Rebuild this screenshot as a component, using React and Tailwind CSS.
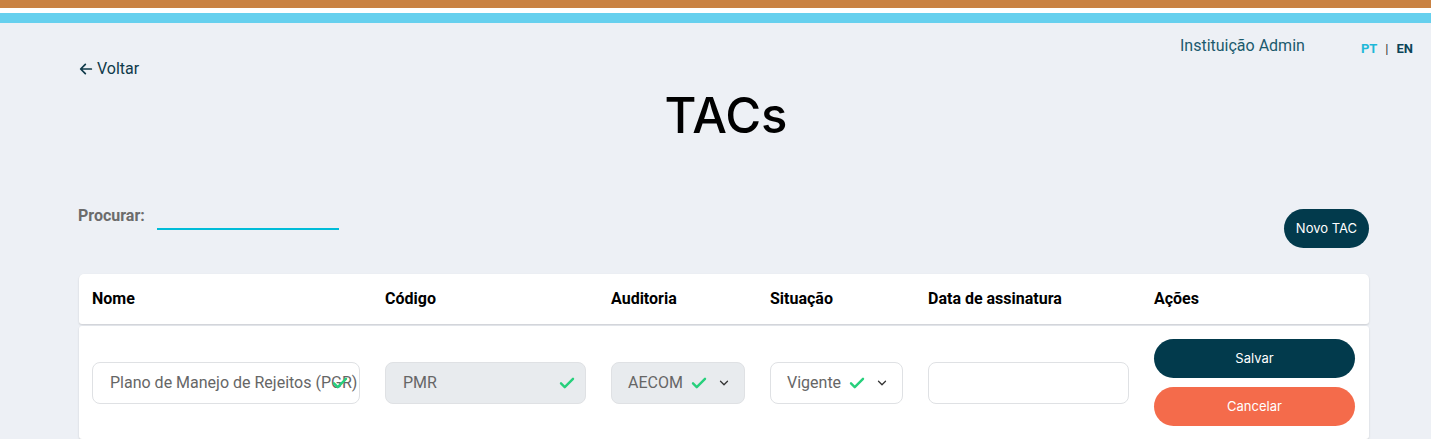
import React, { useState } from "react";

const Check = ({ className = "" }) => (
  <svg viewBox="0 0 24 24" className={className} fill="none" stroke="#27d07c" strokeWidth="3.2" strokeLinecap="round" strokeLinejoin="round">
    <path d="M4 12.5l5 5L20 6.5" />
  </svg>
);

const Chevron = () => (
  <svg viewBox="0 0 24 24" className="w-[14px] h-[14px]" fill="none" stroke="#333" strokeWidth="2.2" strokeLinecap="round" strokeLinejoin="round">
    <path d="M6 9l6 6 6-6" />
  </svg>
);

const TACs = () => {
  const [search, setSearch] = useState("");

  return (
    <div className="min-h-screen bg-[#edf0f5] font-['Roboto',sans-serif]">
      {/* top stripes */}
      <div className="h-[8px] bg-[#c98243]" />
      <div className="h-[5px] bg-white" />
      <div className="h-[10px] bg-[#66d0ee]" />

      <div className="flex justify-end items-center pt-[8px] pr-[18px] h-[37px]">
        <span className="text-[16px] text-[#1b5a6d] mr-[56px]">Instituição Admin</span>
        <div className="flex items-center gap-[8px] text-[13px] font-bold pt-[6px]">
          <span className="text-[#1fb8d8]">PT</span>
          <span className="text-[#333] font-normal">|</span>
          <span className="text-[#0b4458]">EN</span>
        </div>
      </div>

      <div className="ml-[78px] w-[1292px]">
        <button className="flex items-center gap-[3px] text-[16px] text-[#0f3a4a] mt-[-3px]">
          <svg viewBox="0 0 24 24" className="w-[16px] h-[16px]" fill="none" stroke="#0f3a4a" strokeWidth="2.6" strokeLinecap="round" strokeLinejoin="round">
            <path d="M20 12H5M11 5l-7 7 7 7" />
          </svg>
          <span>Voltar</span>
        </button>

        <h1 className="text-center text-[49px] leading-none font-medium text-black font-['Inter',sans-serif] mt-[10px] pl-[4px]">
          TACs
        </h1>

        <div className="flex items-end justify-between mt-[62px]">
          <div className="flex items-center mb-[17px]">
            <label className="text-[16px] font-bold text-[#6b6b6b]">Procurar:</label>
            <input
              value={search}
              onChange={(e) => setSearch(e.target.value)}
              className="ml-[12px] w-[182px] h-[22px] bg-transparent border-b-2 border-[#00bcd8] outline-none mt-[6px]"
            />
          </div>
          <button className="h-[39px] px-[12px] rounded-full bg-[#023a4c] text-white text-[13px] font-['Inter',sans-serif] mr-[1px] mb-[-1px]">
            Novo TAC
          </button>
        </div>

        <div className="mt-[27px] ml-[1px] w-[1290px]">
          <div className="grid grid-cols-[293px_226px_159px_158px_226px_1fr] items-center h-[50px] px-[13px] bg-white rounded-t-[5px] rounded-b-[3px] shadow-[0_1px_2px_rgba(0,0,0,0.15)] text-[16px] font-bold text-black">
            <span>Nome</span>
            <span>Código</span>
            <span>Auditoria</span>
            <span>Situação</span>
            <span>Data de assinatura</span>
            <span>Ações</span>
          </div>

          <div className="grid grid-cols-[293px_226px_159px_158px_226px_1fr] items-center h-[113px] mt-[2px] pl-[13px] pr-[14px] bg-white rounded-[3px] shadow-[0_1px_2px_rgba(0,0,0,0.15)] text-[16px] text-[#666]">
            <div className="w-[268px] h-[42px] border border-[#dfe1e4] rounded-[8px] flex items-center pl-[17px] pr-[10px] overflow-hidden relative">
              <span className="whitespace-nowrap">Plano de Manejo de Rejeitos (PGR)</span>
              <div className="absolute right-[10px] top-[11px] w-[18px] h-[18px]">
                <Check className="w-[18px] h-[18px]" />
              </div>
            </div>
            <div className="w-[201px] h-[42px] border border-[#dfe1e4] bg-[#e8ebee] rounded-[8px] flex items-center justify-between pl-[17px] pr-[9px]">
              <span>PMR</span>
              <Check className="w-[18px] h-[18px]" />
            </div>
            <div className="w-[134px] h-[42px] border border-[#dfe1e4] bg-[#e8ebee] rounded-[8px] flex items-center pl-[16px]">
              <span>AECOM</span>
              <Check className="w-[18px] h-[18px] ml-[7px]" />
              <span className="ml-[9px]"><Chevron /></span>
            </div>
            <div className="w-[133px] h-[42px] border border-[#dfe1e4] bg-white rounded-[8px] flex items-center pl-[16px]">
              <span>Vigente</span>
              <Check className="w-[18px] h-[18px] ml-[7px]" />
              <span className="ml-[9px]"><Chevron /></span>
            </div>
            <div className="w-[201px] h-[42px] border border-[#dfe1e4] bg-white rounded-[8px]" />
            <div className="flex flex-col gap-[9px]">
              <button className="h-[39px] w-full rounded-full bg-[#023a4c] text-white text-[13px] font-['Inter',sans-serif]">
                Salvar
              </button>
              <button className="h-[39px] w-full rounded-full bg-[#f46b4b] text-white text-[13px] font-['Inter',sans-serif]">
                Cancelar
              </button>
            </div>
          </div>
        </div>
      </div>
    </div>
  );
};

export default TACs;
